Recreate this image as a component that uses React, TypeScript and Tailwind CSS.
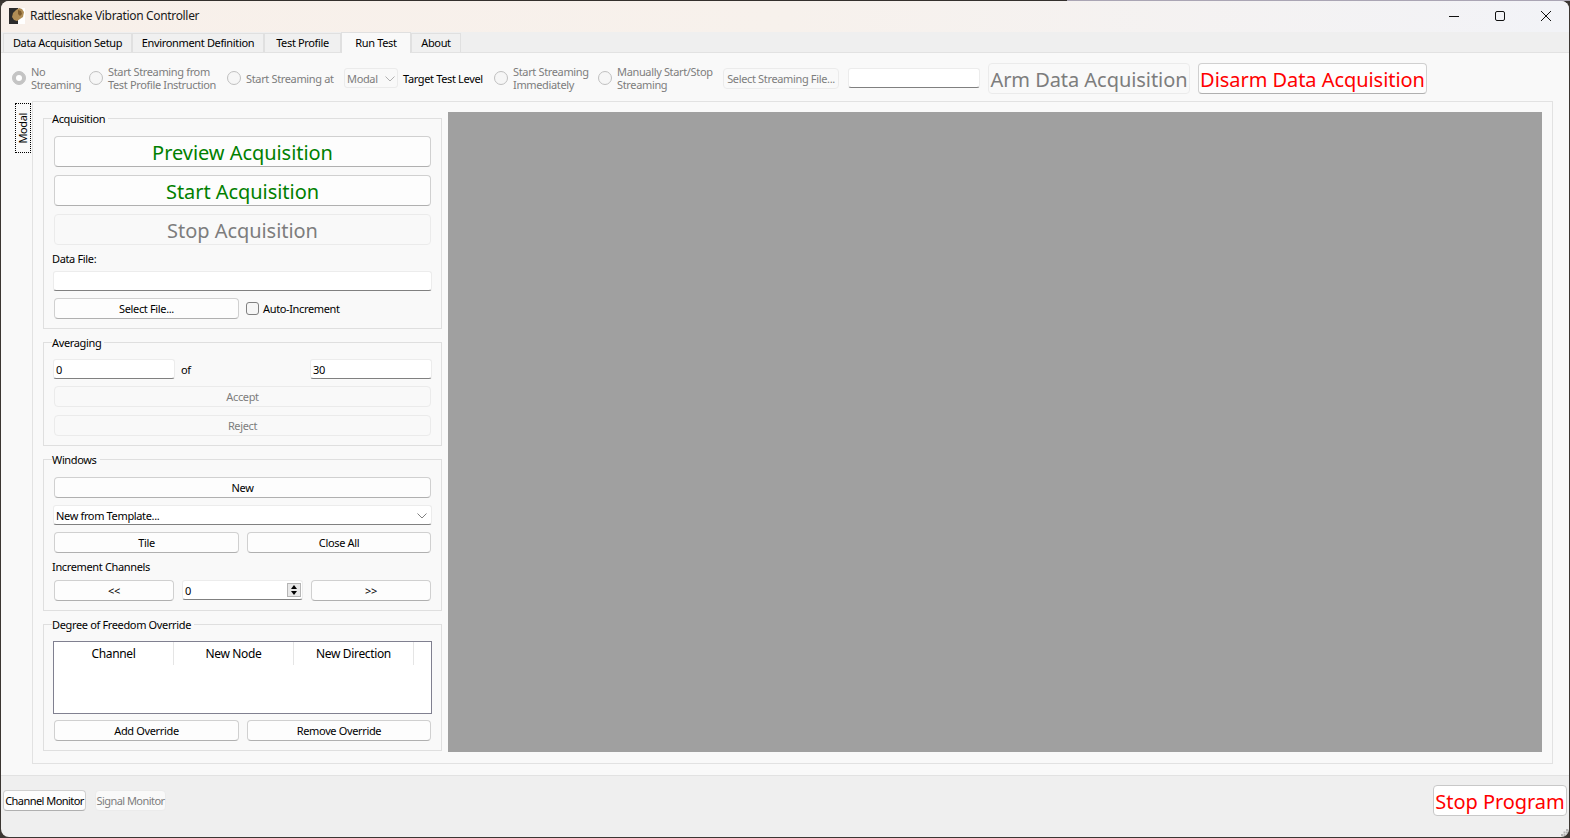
import type { ReactNode } from "react";

const font = { fontFamily: '"Noto Sans", "Liberation Sans", sans-serif' };

const tabs = [
  { label: "Data Acquisition Setup", w: "w-[129px]" },
  { label: "Environment Definition", w: "w-[132px]" },
  { label: "Test Profile", w: "w-[77px]" },
  { label: "Run Test", w: "w-[70px]", active: true },
  { label: "About", w: "w-[50px]" },
];

function Btn({ children, className, disabled }: { children: ReactNode; className: string; disabled?: boolean }) {
  return (
    <div
      className={`flex items-center justify-center rounded-[4px] border pt-[2px] text-[11px] ${
        disabled ? "border-[#ebebeb] bg-[#f9f9f9] text-[#7d7d7d]" : "border-[#d0d0d0] border-b-[#b0b0b0] bg-[#fdfdfd] text-black"
      } ${className}`}
    >
      {children}
    </div>
  );
}

function BigBtn({ children, className }: { children: ReactNode; className: string }) {
  return (
    <div className={`flex items-center justify-center rounded-[4px] border pt-[2px] text-[20px] leading-none tracking-[-0.05px] ${className}`}>
      {children}
    </div>
  );
}

function Field({ children, className }: { children?: ReactNode; className: string }) {
  return (
    <div className={`flex h-[20px] items-center rounded-[3px] border border-[#ececec] border-b-[#808080] bg-white px-[2px] pt-[2px] text-[11px] text-black ${className}`}>
      {children}
    </div>
  );
}

function Radio({ checked }: { checked?: boolean }) {
  return (
    <span className={`flex h-[14px] w-[14px] shrink-0 items-center justify-center rounded-full border ${checked ? "border-[#c4c4c4] bg-[#c4c4c4]" : "border-[#c0c0c0] bg-[#f6f6f6]"}`}>
      {checked && <span className="h-[6px] w-[6px] rounded-full bg-white" />}
    </span>
  );
}

function RadioItem({ lines, checked, className }: { lines: string[]; checked?: boolean; className: string }) {
  return (
    <div className={`flex items-center gap-[5px] text-[11px] leading-[13px] text-[#7d7d7d] ${className}`}>
      <Radio checked={checked} />
      <div className="whitespace-nowrap">
        {lines.map((l) => (
          <div key={l}>{l}</div>
        ))}
      </div>
    </div>
  );
}

function Group({ title, className, children }: { title: string; className: string; children: ReactNode }) {
  return (
    <div className={`relative flex flex-col border border-[#dfdfdf] px-[10px] ${className}`}>
      <span className="absolute left-[8px] top-[-8px] bg-[#f9f9f9] pr-[3px] text-[11px] leading-[16px] text-black">{title}</span>
      {children}
    </div>
  );
}

function Chevron({ color = "#808080" }: { color?: string }) {
  return (
    <svg width="10" height="6" viewBox="0 0 10 6" fill="none" stroke={color} strokeWidth="1">
      <path d="M0.5 0.5 5 5 9.5 0.5" />
    </svg>
  );
}

function Logo() {
  return (
    <svg width="16" height="16" viewBox="0 0 16 16" className="shrink-0">
      <rect width="16" height="16" fill="#fff" />
      <rect width="9" height="16" fill="#2b2b2b" />
      <path d="M3 9 4 5 7 2 10 0 13 1 15 4 14 9 11 11 8 13 5 12Z" fill="#b08d55" />
      <path d="M9 2 12 3 13 6 11 8 9 6Z" fill="#7c5a2c" />
    </svg>
  );
}

function Grip() {
  return (
    <svg width="7" height="7" viewBox="0 0 7 7" fill="#b5b5b5" className="absolute bottom-[1px] right-[1px]">
      <rect x="5" y="0" width="2" height="2" />
      <rect x="2.5" y="2.5" width="2" height="2" />
      <rect x="5" y="2.5" width="2" height="2" />
      <rect x="0" y="5" width="2" height="2" />
      <rect x="2.5" y="5" width="2" height="2" />
      <rect x="5" y="5" width="2" height="2" />
    </svg>
  );
}

export default function App() {
  return (
    <div style={font} className="flex h-[838px] w-[1570px] flex-col overflow-hidden bg-[#3b3632] tracking-[-0.35px]">
      <div className="flex h-[1px] shrink-0">
        <div className="w-[1067px] bg-[#34302d]" />
        <div className="flex-1 bg-[#aaa5b4]" />
      </div>
      <div className="relative mx-[1px] flex h-[836px] shrink-0 flex-col overflow-hidden rounded-[8px] bg-[#efefef]">
        {/* title bar */}
        <div className="flex h-[31px] shrink-0 items-center bg-gradient-to-r from-[#f8f0ea] via-[#f7f1ec] to-[#f2f3f7] pb-[2px] pl-[8px]">
          <Logo />
          <span className="ml-[5px] text-[12px] tracking-[-0.33px] text-[#1a1a1a]">Rattlesnake Vibration Controller</span>
          <div className="ml-auto flex items-center">
            <svg width="46" height="16" viewBox="0 0 46 16" stroke="#111" fill="none"><path d="M18 8.5h10" /></svg>
            <svg width="46" height="16" viewBox="0 0 46 16" stroke="#111" fill="none"><rect x="18.5" y="3.5" width="9" height="9" rx="1.5" /></svg>
            <svg width="46" height="16" viewBox="0 0 46 16" stroke="#111" fill="none"><path d="M18 3l10 10M28 3 18 13" /></svg>
          </div>
        </div>

        {/* tabs */}
        <div className="flex h-[20px] shrink-0 items-end pl-[2px]">
          {tabs.map((t) => (
            <div
              key={t.label}
              className={`flex items-center justify-center border border-b-0 border-[#e0e0e0] text-[11px] text-black ${t.w} ${
                t.active ? "z-10 -mb-[1px] h-[21px] bg-[#f9f9f9]" : "h-[19px] bg-[#f0f0f0]"
              }`}
            >
              {t.label}
            </div>
          ))}
        </div>

        {/* main area */}
        <div className="flex h-[724px] shrink-0 flex-col border-y border-[#e2e2e2] bg-[#f9f9f9]">
          {/* streaming toolbar */}
          <div className="mt-[10px] flex h-[31px] shrink-0 items-center pb-[1px] pl-[11px]">
            <RadioItem checked lines={["No", "Streaming"]} className="w-[77px]" />
            <RadioItem lines={["Start Streaming from", "Test Profile Instruction"]} className="w-[138px]" />
            <RadioItem lines={["Start Streaming at"]} className="w-[117px]" />
            <div className="flex h-[20px] w-[54px] items-center justify-between rounded-[3px] border border-[#ebebeb] bg-[#f9f9f9] px-[2px] pt-[2px] text-[11px] text-[#7d7d7d]">
              Modal
              <Chevron color="#b0b0b0" />
            </div>
            <span className="ml-[5px] w-[91px] whitespace-nowrap pt-[2px] text-[11px] text-black">Target Test Level</span>
            <RadioItem lines={["Start Streaming", "Immediately"]} className="w-[104px]" />
            <RadioItem lines={["Manually Start/Stop", "Streaming"]} className="w-[125px]" />
            <Btn disabled className="h-[21px] w-[116px] whitespace-nowrap">Select Streaming File...</Btn>
            <Field className="ml-[9px] w-[132px]" />
            <BigBtn className="ml-[8px] h-[31px] w-[202px] self-start whitespace-nowrap border-[#ebebeb] bg-[#f9f9f9] text-[#7d7d7d]">Arm Data Acquisition</BigBtn>
            <BigBtn className="ml-[8px] h-[31px] w-[229px] self-start whitespace-nowrap border-[#d0d0d0] border-b-[#b0b0b0] bg-[#fdfdfd] text-[#ff0000]">Disarm Data Acquisition</BigBtn>
          </div>

          {/* vertical tab + pane */}
          <div className="ml-[14px] mt-[7px] flex h-[663px] shrink-0 items-start">
            <div className="mt-[2px] flex h-[50px] w-[16px] shrink-0 items-center justify-center border border-dotted border-black bg-[#f9f9f9]">
              <span className="-rotate-90 text-[11px] text-black">Modal</span>
            </div>
            <div className="ml-[1px] flex h-[663px] w-[1521px] border border-[#e2e2e2] pl-[10px] pr-[10px]">
              {/* left column */}
              <div className="mt-[16px] flex w-[399px] shrink-0 flex-col gap-[13px]">
                <Group title="Acquisition" className="h-[211px] pt-[17px]">
                  <div className="flex flex-col gap-[8px]">
                    <BigBtn className="h-[31px] border-[#d0d0d0] border-b-[#b0b0b0] bg-[#fdfdfd] text-[#008000]">Preview Acquisition</BigBtn>
                    <BigBtn className="h-[31px] border-[#d0d0d0] border-b-[#b0b0b0] bg-[#fdfdfd] text-[#008000]">Start Acquisition</BigBtn>
                    <BigBtn className="h-[31px] border-[#ebebeb] bg-[#f9f9f9] text-[#7d7d7d]">Stop Acquisition</BigBtn>
                  </div>
                  <span className="-ml-[2px] mt-[6px] h-[16px] text-[11px] leading-[16px] text-black">Data File:</span>
                  <Field className="-mx-[1px] mt-[4px]" />
                  <div className="mt-[7px] flex items-center">
                    <Btn className="h-[21px] w-[185px]">Select File...</Btn>
                    <span className="ml-[7px] h-[13px] w-[13px] rounded-[3px] border border-[#808080] bg-[#f6f6f6]" />
                    <span className="ml-[4px] pt-[1px] text-[11px] text-black">Auto-Increment</span>
                  </div>
                </Group>

                <Group title="Averaging" className="h-[104px] pt-[16px]">
                  <div className="flex items-center">
                    <Field className="-ml-[1px] w-[122px]">0</Field>
                    <span className="ml-[6px] pt-[2px] text-[11px] text-black">of</span>
                    <Field className="-mr-[1px] ml-auto w-[122px]">30</Field>
                  </div>
                  <Btn disabled className="mt-[7px] h-[21px]">Accept</Btn>
                  <Btn disabled className="mt-[8px] h-[21px]">Reject</Btn>
                </Group>

                <Group title="Windows" className="h-[152px] pt-[17px]">
                  <Btn className="h-[21px]">New</Btn>
                  <Field className="-mx-[1px] mt-[7px] justify-between">
                    New from Template...
                    <span className="mr-[2px]"><Chevron /></span>
                  </Field>
                  <div className="mt-[7px] flex gap-[8px]">
                    <Btn className="h-[21px] w-[185px]">Tile</Btn>
                    <Btn className="h-[21px] flex-1">Close All</Btn>
                  </div>
                  <span className="-ml-[2px] mt-[6px] h-[16px] text-[11px] leading-[16px] text-black">Increment Channels</span>
                  <div className="mt-[5px] flex items-start gap-[8px]">
                    <Btn className="h-[21px] w-[120px]">&lt;&lt;</Btn>
                    <Field className="w-[121px] justify-between pr-[1px]">
                      0
                      <div className="-mt-[2px] flex h-[14px] w-[14px] flex-col items-center justify-around border border-[#b5b5b5] bg-[#e8e8e8]">
                        <span className="h-0 w-0 border-x-[3px] border-b-[4px] border-x-transparent border-b-black" />
                        <span className="h-0 w-0 border-x-[3px] border-t-[4px] border-x-transparent border-t-black" />
                      </div>
                    </Field>
                    <Btn className="h-[21px] flex-1">&gt;&gt;</Btn>
                  </div>
                </Group>

                <Group title="Degree of Freedom Override" className="h-[127px] pt-[16px]">
                  <div className="-mx-[1px] h-[73px] border border-[#808090] bg-white">
                    <div className="flex h-[23px] text-[12px] text-black">
                      {["Channel", "New Node", "New Direction"].map((h) => (
                        <div key={h} className="flex w-[120px] items-center justify-center border-r border-[#e5e5e5]">{h}</div>
                      ))}
                    </div>
                  </div>
                  <div className="mt-[6px] flex gap-[8px]">
                    <Btn className="h-[21px] w-[185px]">Add Override</Btn>
                    <Btn className="h-[21px] flex-1">Remove Override</Btn>
                  </div>
                </Group>
              </div>

              {/* plot area */}
              <div className="ml-[6px] mt-[10px] h-[640px] w-[1095px] bg-[#a0a0a0]" />
            </div>
          </div>
        </div>

        {/* status row */}
        <div className="flex flex-1 items-start">
          <div className="mt-[14px] flex pl-[2px]">
            <Btn className="h-[21px] w-[83px] whitespace-nowrap tracking-[-0.55px]">Channel Monitor</Btn>
            <Btn disabled className="ml-[9px] h-[21px] w-[71px] whitespace-nowrap tracking-[-0.55px]">Signal Monitor</Btn>
          </div>
          <BigBtn className="ml-auto mr-[2px] mt-[9px] h-[31px] w-[134px] whitespace-nowrap border-[#c8c8c8] bg-white text-[#ff0000]">Stop Program</BigBtn>
        </div>
        <Grip />
      </div>
    </div>
  );
}
